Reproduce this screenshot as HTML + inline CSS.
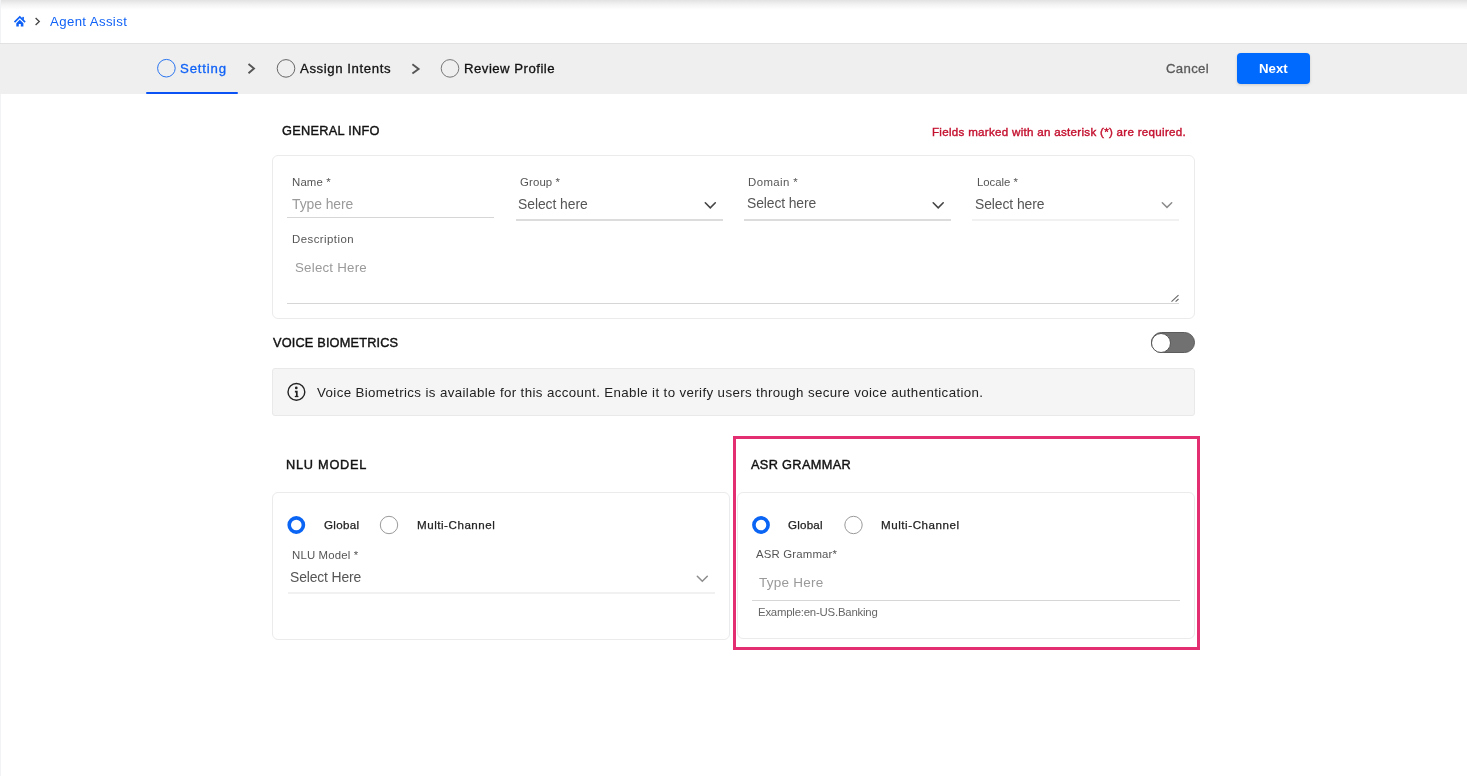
<!DOCTYPE html>
<html><head><meta charset="utf-8"><title>Agent Assist</title>
<style>
html,body{margin:0;padding:0}
body{width:1467px;height:776px;position:relative;overflow:hidden;background:#fff;font-family:"Liberation Sans",sans-serif}
.a{position:absolute;box-sizing:border-box}
.t{position:absolute;white-space:nowrap;line-height:1;font-family:"Liberation Sans",sans-serif;will-change:transform}
svg{position:absolute;overflow:visible}
</style></head><body>
<div class="a" style="left:0;top:0;width:1467px;height:10px;background:linear-gradient(#e2e2e2,#f4f4f4 50%,#fff)"></div>
<div class="a" style="left:0;top:0;width:1px;height:776px;background:#f2f3f5"></div>
<!-- home icon -->
<svg style="left:0;top:0" width="1467" height="100" viewBox="0 0 1467 100">
 <path d="M14.5 22.1 L19.8 16.9 L25.1 22.1" fill="none" stroke="#1062f6" stroke-width="1.7"/>
 <rect x="22.3" y="16.9" width="1.6" height="2.8" fill="#1062f6"/>
 <path d="M16.3 23.2 L19.8 19.8 L23.4 23.2 L23.4 26.4 L20.8 26.4 L20.8 23.9 L18.8 23.9 L18.8 26.4 L16.3 26.4 Z" fill="#1062f6"/>
 <path d="M35.6 18 L39.3 21.5 L35.6 25" fill="none" stroke="#444" stroke-width="1.3"/>
</svg>
<!-- navbar -->
<div class="a" style="left:0;top:43px;width:1467px;height:51px;background:#efefef;border-top:1px solid #e2e2e2"></div>
<div class="a" style="left:146px;top:92px;width:92px;height:2px;background:#0b52f5;border-radius:1px"></div>
<svg style="left:0;top:0" width="1467" height="100" viewBox="0 0 1467 100">
 <circle cx="166.4" cy="68.2" r="8.8" fill="none" stroke="#2a75f0" stroke-width="1"/>
 <circle cx="286" cy="68.4" r="8.8" fill="none" stroke="#666" stroke-width="1"/>
 <circle cx="450" cy="68.4" r="8.8" fill="none" stroke="#777" stroke-width="1"/>
 <path d="M248.5 64 L254 68.6 L248.5 73.2" fill="none" stroke="#555" stroke-width="1.9"/>
 <path d="M412.4 64.3 L418.6 68.9 L412.4 73.5" fill="none" stroke="#555" stroke-width="1.9"/>
</svg>
<div class="a" style="left:1237px;top:53px;width:73px;height:31px;background:#006aff;border-radius:4px;box-shadow:0 1px 3px rgba(0,0,0,0.15)"></div>
<!-- general info card -->
<div class="a" style="left:272px;top:155px;width:923px;height:164px;border:1px solid #ebebeb;border-radius:6px"></div>
<div class="a" style="left:287px;top:217px;width:207px;height:1px;background:#d6d6d6"></div>
<div class="a" style="left:516px;top:219px;width:207px;height:2px;background:#dcdcdc"></div>
<div class="a" style="left:744px;top:219px;width:207px;height:2px;background:#dcdcdc"></div>
<div class="a" style="left:972px;top:219px;width:207px;height:2px;background:#f1f1f1"></div>
<div class="a" style="left:287px;top:303px;width:892px;height:1px;background:#d6d6d6"></div>
<svg style="left:0;top:0" width="1467" height="700" viewBox="0 0 1467 700">
 <path d="M705.3 202.8 L710.3 207.8 L715.3 202.8" fill="none" stroke="#444" stroke-width="1.6" stroke-linecap="round"/>
 <path d="M933.2 202.8 L938.2 207.8 L943.2 202.8" fill="none" stroke="#444" stroke-width="1.6" stroke-linecap="round"/>
 <path d="M1162.3 202.7 L1167 207.4 L1171.7 202.7" fill="none" stroke="#8c8c8c" stroke-width="1.5" stroke-linecap="round"/>
 <path d="M697.3 576.3 L702.3 581.3 L707.3 576.3" fill="none" stroke="#8c8c8c" stroke-width="1.5" stroke-linecap="round"/>
 <path d="M1171.5 301.6 L1178.5 295.2 M1175.6 301.6 L1178.5 299" fill="none" stroke="#666" stroke-width="1.1"/>
</svg>
<!-- voice biometrics -->
<div class="a" style="left:1151px;top:332px;width:44px;height:21px;background:#717171;border:1px solid #5c5c5c;border-radius:11px"></div>
<div class="a" style="left:1151px;top:332.5px;width:20.3px;height:20.3px;background:#fff;border:1.7px solid #555;border-radius:50%"></div>
<div class="a" style="left:272px;top:368px;width:923px;height:48px;background:#f5f5f5;border:1px solid #e9e9e9;border-radius:3px"></div>
<svg style="left:0;top:0" width="1467" height="700" viewBox="0 0 1467 700">
 <circle cx="296.4" cy="391.9" r="8.4" fill="none" stroke="#222" stroke-width="1.4"/>
 <circle cx="296.3" cy="387.9" r="1.35" fill="#222"/>
 <path d="M294.9 391.6 L296.8 391.6 L296.8 396.2" fill="none" stroke="#222" stroke-width="1.7"/>
 <path d="M294.8 396.5 L298.4 396.5" fill="none" stroke="#222" stroke-width="1.3"/>
</svg>
<!-- NLU / ASR -->
<div class="a" style="left:272px;top:492px;width:458px;height:148px;border:1px solid #ebebeb;border-radius:6px"></div>
<div class="a" style="left:737px;top:492px;width:458px;height:147px;border:1px solid #ebebeb;border-radius:6px"></div>
<div class="a" style="left:733px;top:436px;width:467px;height:214px;border:3px solid #e32e72"></div>
<div class="a" style="left:288px;top:592px;width:427px;height:2px;background:#f1f1f1"></div>
<div class="a" style="left:752px;top:600px;width:428px;height:1px;background:#d6d6d6"></div>
<svg style="left:0;top:0" width="1467" height="700" viewBox="0 0 1467 700">
 <circle cx="296.3" cy="525" r="7.1" fill="#fff" stroke="#0a64f4" stroke-width="3.6"/>
 <circle cx="389" cy="525" r="8.7" fill="#fff" stroke="#9a9a9a" stroke-width="1"/>
 <circle cx="761" cy="525" r="7.1" fill="#fff" stroke="#0a64f4" stroke-width="3.6"/>
 <circle cx="853.5" cy="525" r="8.7" fill="#fff" stroke="#9a9a9a" stroke-width="1"/>
</svg>
<div class="t" style="left:50.20px;top:14.88px;font-size:13.20px;letter-spacing:0.388px;color:#1062f6">Agent Assist</div>
<div class="t" style="left:180.20px;top:61.68px;font-size:13.20px;letter-spacing:0.846px;color:#1062f6;-webkit-text-stroke:0.3px #1062f6">Setting</div>
<div class="t" style="left:299.70px;top:61.98px;font-size:13.20px;letter-spacing:0.589px;color:#111;-webkit-text-stroke:0.3px #111">Assign Intents</div>
<div class="t" style="left:463.60px;top:61.98px;font-size:13.20px;letter-spacing:0.481px;color:#111;-webkit-text-stroke:0.3px #111">Review Profile</div>
<div class="t" style="left:1165.70px;top:62.18px;font-size:13.20px;letter-spacing:0.316px;color:#5a5a5a;-webkit-text-stroke:0.3px #5a5a5a">Cancel</div>
<div class="t" style="left:1259.00px;top:62.18px;font-size:13.20px;letter-spacing:0.036px;color:#fff;font-weight:bold">Next</div>
<div class="t" style="left:281.90px;top:125.46px;font-size:12.75px;letter-spacing:0.271px;color:#111;-webkit-text-stroke:0.4px #111">GENERAL INFO</div>
<div class="t" style="left:931.80px;top:126.14px;font-size:11.60px;letter-spacing:0.285px;color:#c41230;-webkit-text-stroke:0.4px #c41230">Fields marked with an asterisk (*) are required.</div>
<div class="t" style="left:291.70px;top:176.61px;font-size:11.40px;letter-spacing:0.150px;color:#555">Name *</div>
<div class="t" style="left:292.30px;top:198.48px;font-size:13.90px;letter-spacing:-0.069px;color:#9a9a9a">Type here</div>
<div class="t" style="left:519.60px;top:176.81px;font-size:11.40px;letter-spacing:0.130px;color:#555">Group *</div>
<div class="t" style="left:518.00px;top:197.59px;font-size:13.90px;letter-spacing:-0.054px;color:#555">Select here</div>
<div class="t" style="left:748.20px;top:176.61px;font-size:11.40px;letter-spacing:0.412px;color:#555">Domain *</div>
<div class="t" style="left:746.70px;top:197.48px;font-size:13.90px;letter-spacing:-0.104px;color:#555">Select here</div>
<div class="t" style="left:976.50px;top:176.91px;font-size:11.40px;letter-spacing:-0.047px;color:#555">Locale *</div>
<div class="t" style="left:974.60px;top:197.69px;font-size:13.90px;letter-spacing:-0.084px;color:#555">Select here</div>
<div class="t" style="left:291.80px;top:234.01px;font-size:11.40px;letter-spacing:0.466px;color:#555">Description</div>
<div class="t" style="left:295.30px;top:260.60px;font-size:13.30px;letter-spacing:0.222px;color:#9a9a9a">Select Here</div>
<div class="t" style="left:273.30px;top:336.56px;font-size:12.75px;letter-spacing:0.170px;color:#111;-webkit-text-stroke:0.4px #111">VOICE BIOMETRICS</div>
<div class="t" style="left:316.60px;top:385.69px;font-size:13.30px;letter-spacing:0.381px;color:#222">Voice Biometrics is available for this account. Enable it to verify users through secure voice authentication.</div>
<div class="t" style="left:285.60px;top:458.76px;font-size:12.75px;letter-spacing:0.750px;color:#111;-webkit-text-stroke:0.4px #111">NLU MODEL</div>
<div class="t" style="left:323.90px;top:519.24px;font-size:11.60px;letter-spacing:0.293px;color:#222;-webkit-text-stroke:0.25px #222">Global</div>
<div class="t" style="left:416.70px;top:519.24px;font-size:11.60px;letter-spacing:0.529px;color:#222;-webkit-text-stroke:0.25px #222">Multi-Channel</div>
<div class="t" style="left:291.50px;top:549.51px;font-size:11.40px;letter-spacing:0.166px;color:#555">NLU Model *</div>
<div class="t" style="left:289.70px;top:570.58px;font-size:13.90px;letter-spacing:-0.135px;color:#555">Select Here</div>
<div class="t" style="left:750.60px;top:458.56px;font-size:12.75px;letter-spacing:0.337px;color:#111;-webkit-text-stroke:0.4px #111">ASR GRAMMAR</div>
<div class="t" style="left:788.30px;top:519.14px;font-size:11.60px;letter-spacing:0.213px;color:#222;-webkit-text-stroke:0.25px #222">Global</div>
<div class="t" style="left:880.70px;top:519.14px;font-size:11.60px;letter-spacing:0.554px;color:#222;-webkit-text-stroke:0.25px #222">Multi-Channel</div>
<div class="t" style="left:755.80px;top:549.21px;font-size:11.40px;letter-spacing:0.166px;color:#555">ASR Grammar*</div>
<div class="t" style="left:759.20px;top:576.02px;font-size:13.50px;letter-spacing:0.254px;color:#9a9a9a">Type Here</div>
<div class="t" style="left:757.70px;top:606.91px;font-size:11.40px;letter-spacing:-0.218px;color:#666">Example:en-US.Banking</div>
</body></html>
